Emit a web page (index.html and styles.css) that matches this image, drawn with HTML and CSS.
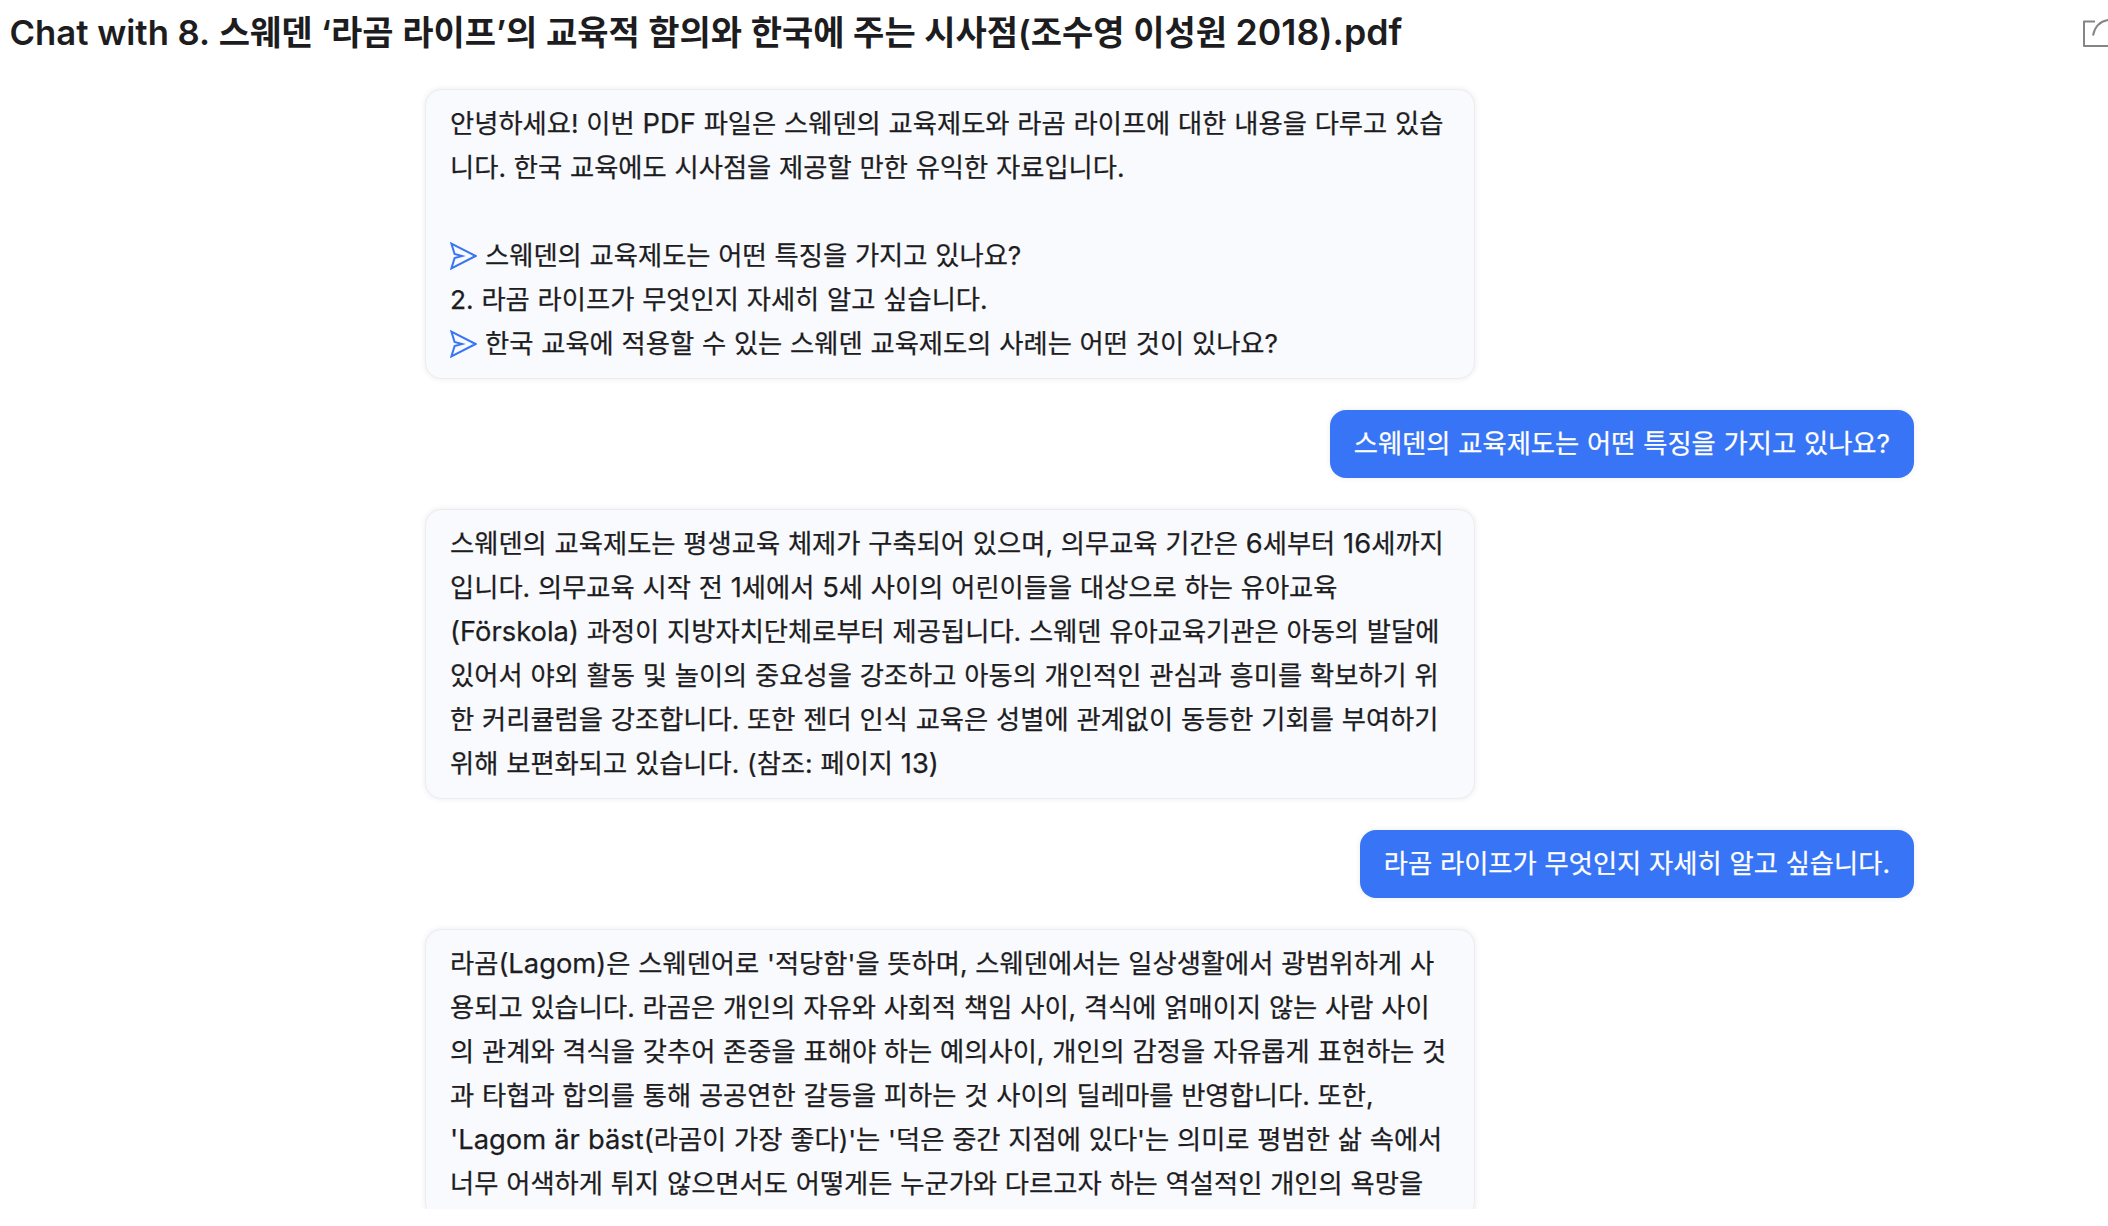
FILE: index.html
```html
<!DOCTYPE html>
<html lang="ko">
<head>
  <meta charset="UTF-8">
  <meta name="viewport" content="width=device-width, initial-scale=1.0">
  <title>Chat with PDF</title>
  <link rel="stylesheet" href="styles.css">
</head>
<body>
  <header class="header">
    <h1><span class="en">Chat with 8.</span> 스웨덴 ‘라곰 라이프’의 교육적 함의와 한국에 주는 시사점(조수영 이성원 <span class="en year">2018).pdf</span></h1>
    <svg class="share" viewBox="0 0 36 36" fill="none" stroke="#858585" stroke-width="2">
      <path d="M13 7.5H2V32H32V24" stroke-linejoin="round"/>
      <path d="M11 21.5C13 11 20 5.5 31 5.5"/>
    </svg>
  </header>

  <main class="chat">
    <div class="message bot">
      안녕하세요! 이번 <span class="en">PDF</span> 파일은 스웨덴의 교육제도와 라곰 라이프에 대한 내용을 다루고 있습<br>
      니다. 한국 교육에도 시사점을 제공할 만한 유익한 자료입니다.<br>
      <br>
      <a class="question"><svg class="send" viewBox="0 0 27 28"><path d="M1.4 1.6L25.6 14L1.4 26.4L4.6 16L12 14L4.6 12Z"/></svg>스웨덴의 교육제도는 어떤 특징을 가지고 있나요?</a>
      2. 라곰 라이프가 무엇인지 자세히 알고 싶습니다.<br>
      <a class="question"><svg class="send" viewBox="0 0 27 28"><path d="M1.4 1.6L25.6 14L1.4 26.4L4.6 16L12 14L4.6 12Z"/></svg>한국 교육에 적용할 수 있는 스웨덴 교육제도의 사례는 어떤 것이 있나요?</a>
    </div>

    <div class="message user">스웨덴의 교육제도는 어떤 특징을 가지고 있나요?</div>

    <div class="message bot">
      스웨덴의 교육제도는 평생교육 체제가 구축되어 있으며, 의무교육 기간은 <span class="en">6</span>세부터 <span class="en">16</span>세까지<br>
      입니다. 의무교육 시작 전 <span class="en">1</span>세에서 <span class="en">5</span>세 사이의 어린이들을 대상으로 하는 유아교육<br>
      <span class="en">(Förskola)</span> 과정이 지방자치단체로부터 제공됩니다. 스웨덴 유아교육기관은 아동의 발달에<br>
      있어서 야외 활동 및 놀이의 중요성을 강조하고 아동의 개인적인 관심과 흥미를 확보하기 위<br>
      한 커리큘럼을 강조합니다. 또한 젠더 인식 교육은 성별에 관계없이 동등한 기회를 부여하기<br>
      위해 보편화되고 있습니다. (참조: 페이지 <span class="en">13)</span>
    </div>

    <div class="message user">라곰 라이프가 무엇인지 자세히 알고 싶습니다.</div>

    <div class="message bot">
      라곰<span class="en">(Lagom)</span>은 스웨덴어로 '적당함'을 뜻하며, 스웨덴에서는 일상생활에서 광범위하게 사<br>
      용되고 있습니다. 라곰은 개인의 자유와 사회적 책임 사이, 격식에 얽매이지 않는 사람 사이<br>
      의 관계와 격식을 갖추어 존중을 표해야 하는 예의사이, 개인의 감정을 자유롭게 표현하는 것<br>
      과 타협과 합의를 통해 공공연한 갈등을 피하는 것 사이의 딜레마를 반영합니다. 또한,<br>
      <span class="en">'Lagom är bäst(</span>라곰이 가장 좋다)'는 '덕은 중간 지점에 있다'는 의미로 평범한 삶 속에서<br>
      너무 어색하게 튀지 않으면서도 어떻게든 누군가와 다르고자 하는 역설적인 개인의 욕망을
    </div>
  </main>
</body>
</html>
```

FILE: styles.css
```css
* {
  margin: 0;
  padding: 0;
  box-sizing: border-box;
}

body {
  height: 1209px;
  overflow: hidden;
  display: flex;
  flex-direction: column;
  background: #fff;
  color: #1d1d1f;
  font-family: Inter, "Noto Sans CJK KR", sans-serif;
}

.header {
  height: 89px;
  flex-shrink: 0;
  display: flex;
  justify-content: space-between;
  align-items: flex-start;
  padding: 8px 0 0 9.5px;
}

h1 {
  font-size: 34px;
  line-height: 50px;
  font-weight: 600;
  white-space: nowrap;
}

.en {
  font-size: 1.04em;
  line-height: 1;
}

h1 .en {
  font-size: 1.02em;
}

h1 .year {
  font-size: 1.05em;
}

.share {
  width: 36px;
  height: 36px;
  flex-shrink: 0;
  margin: 6px -10px 0 0;
}

.chat {
  flex: 1;
  min-height: 0;
  overflow: hidden;
  display: flex;
  flex-direction: column;
  gap: 31px;
  padding: 4px 194px 0 425px;
  margin-top: -4px;
}

.message {
  flex-shrink: 0;
  border-radius: 16px;
  font-size: 26.3px;
  line-height: 44px;
  word-spacing: 0.4px;
  white-space: nowrap;
  -webkit-text-stroke: 0.25px;
  box-shadow: 0 0 6px rgba(0, 0, 0, 0.08);
}

.bot {
  align-self: flex-start;
  width: 1050px;
  padding: 12px 24px;
  border: 1px solid #ececef;
  background: #f9fafe;
}

.user {
  align-self: flex-end;
  padding: 12px 24px;
  background: #3875f6;
  color: #fff;
}

.question {
  display: flex;
  align-items: center;
  gap: 8px;
}

.send {
  width: 27px;
  height: 28px;
  fill: none;
  stroke: #3875f6;
  stroke-width: 2;
}
```
